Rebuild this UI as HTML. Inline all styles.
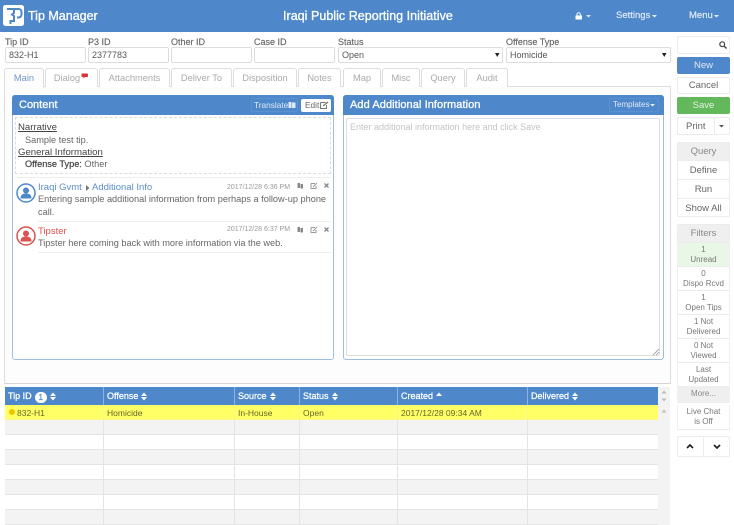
<!DOCTYPE html>
<html><head><meta charset="utf-8">
<style>
html,body{margin:0;padding:0;width:734px;height:525px;overflow:hidden;background:#fff;}
body{font-family:"Liberation Sans",sans-serif;font-size:10px;color:#555;position:relative;}
.a{position:absolute;box-sizing:border-box;white-space:nowrap;}
.lab{top:37px;font-size:9px;line-height:10px;color:#666;-webkit-text-stroke:.15px #666;}
.inp{top:47px;height:16px;border:1px solid #ddd;border-radius:2px;background:#fff;font-size:9px;line-height:15px;padding-left:3px;color:#555;}
.tab{top:68px;height:19px;border:1px solid #ddd;border-bottom:0;border-radius:3px 3px 0 0;background:#fff;text-align:center;line-height:19px;font-size:9.300px;color:#aaa;}
.panel{border:1px solid #9dbfe3;border-radius:3px;background:#fff;}
.ph{background:#4e88ca;color:#fff;font-size:11px;-webkit-text-stroke:.3px #fff;line-height:20px;}
.btn{left:677px;width:53px;border:1px solid #ececec;border-radius:2px;background:#fff;text-align:center;font-size:9.500px;color:#666;}
.hc{top:387px;height:18px;background:#4e88ca;border-right:1px solid #8db3de;color:#fff;-webkit-text-stroke:.25px #fff;font-size:9px;line-height:18px;padding-left:3px;}
.sb{left:677px;width:53px;border-bottom:1px solid #ececec;background:#fff;text-align:center;font-size:8px;line-height:10px;color:#777;border-left:1px solid #f0f0f0;border-right:1px solid #f0f0f0;}
.row{left:5px;width:653px;height:15px;border-bottom:1px solid #e4e4e4;}
.vl{top:405px;width:1px;height:120px;background:#e4e4e4;}
.cell{top:406px;font-size:8.500px;line-height:15px;color:#66662a;}
.ts{font-size:7px;color:#999;}
.txt{font-size:9.200px;line-height:12px;color:#666;}
.sort{display:inline-block;vertical-align:-2px;margin-left:3px;-webkit-text-stroke:0;}
</style></head><body>

<div class="a" style="left:0;top:0;width:734px;height:32px;background:#4e88ca;"></div>
<svg class="a" style="left:3px;top:5px" width="22" height="22" viewBox="0 0 22 22">
<rect x="0" y="0" width="21" height="21" rx="2.500" fill="#fff"/>
<path d="M9 4h6.500a3 3 0 0 1 3 3v2.500a3 3 0 0 1-3 3H14" fill="none" stroke="#4e88ca" stroke-width="2"/>
<path d="M4 4h7v4L9 9.500 11 11v5H7.500v3" fill="none" stroke="#4e88ca" stroke-width="2"/>
</svg>
<div class="a" style="left:28px;top:8px;font-size:12.500px;line-height:17px;color:#fff;-webkit-text-stroke:.3px #fff;">Tip Manager</div>
<div class="a" style="left:283px;top:8px;font-size:12.500px;line-height:17px;color:#fff;-webkit-text-stroke:.3px #fff;letter-spacing:.03px;">Iraqi Public Reporting Initiative</div>
<svg class="a" style="left:575px;top:12px" width="18" height="8" viewBox="0 0 18 8"><path d="M2 3.500V2.500a1.700 1.700 0 0 1 3.400 0v1" fill="none" stroke="#fff" stroke-width="1"/><rect x=".5" y="3.500" width="6.500" height="4" fill="#fff"/><path d="M11 3h5l-2.500 2.500z" fill="#d8e5f4"/></svg>
<div class="a" style="left:616px;top:10px;font-size:9.500px;line-height:12px;color:#e4edf7;-webkit-text-stroke:.15px #e4edf7;">Settings</div>
<svg class="a" style="left:652px;top:15px" width="6" height="3"><path d="M0 0h5L2.500 2.500z" fill="#e4edf7"/></svg>
<div class="a" style="left:689px;top:10px;font-size:9.500px;line-height:12px;color:#e4edf7;-webkit-text-stroke:.15px #e4edf7;">Menu</div>
<svg class="a" style="left:714px;top:15px" width="6" height="3"><path d="M0 0h5L2.500 2.500z" fill="#e4edf7"/></svg>

<div class="a lab" style="left:5px;">Tip ID</div>
<div class="a lab" style="left:88px;">P3 ID</div>
<div class="a lab" style="left:171px;">Other ID</div>
<div class="a lab" style="left:254px;">Case ID</div>
<div class="a lab" style="left:338px;">Status</div>
<div class="a lab" style="left:506px;">Offense Type</div>
<div class="a inp" style="left:5px;width:81px;">832-H1</div>
<div class="a inp" style="left:88px;width:81px;">2377783</div>
<div class="a inp" style="left:171px;width:81px;"></div>
<div class="a inp" style="left:254px;width:81px;"></div>
<div class="a inp" style="left:338px;width:165px;">Open</div>
<div class="a inp" style="left:506px;width:165px;">Homicide</div>
<svg class="a" style="left:495px;top:53px" width="5" height="4"><path d="M0 0h4.500L2.250 4z" fill="#222"/></svg>
<svg class="a" style="left:662px;top:53px" width="5" height="4"><path d="M0 0h4.500L2.250 4z" fill="#222"/></svg>

<div class="a" style="left:4px;top:86px;width:667px;height:298px;border:1px solid #ddd;background:#fdfdfd;border-bottom-color:#dcd4d4;"></div>
<div class="a tab" style="left:4px;width:40px;color:#6f97cc;background:#fdfdfd;height:20px;">Main</div>
<div class="a tab" style="left:45px;width:53px;padding-right:9px;">Dialog</div>
<svg class="a" style="left:81px;top:73px" width="8" height="7"><path d="M1.500 .5h4.500a1 1 0 0 1 1 1v1.500a1 1 0 0 1-1 1H4L2.500 5.500V4h-1a1 1 0 0 1-1-1V1.500a1 1 0 0 1 1-1z" fill="#d9342f"/></svg>
<div class="a tab" style="left:99px;width:71px;">Attachments</div>
<div class="a tab" style="left:171px;width:61px;">Deliver To</div>
<div class="a tab" style="left:233px;width:64px;">Disposition</div>
<div class="a tab" style="left:298px;width:43px;">Notes</div>
<div class="a tab" style="left:343px;width:38px;">Map</div>
<div class="a tab" style="left:382px;width:38px;">Misc</div>
<div class="a tab" style="left:421px;width:44px;">Query</div>
<div class="a tab" style="left:466px;width:42px;">Audit</div>

<!-- Content panel -->
<div class="a panel" style="left:12px;top:95px;width:322px;height:265px;"></div>
<div class="a ph" style="left:12px;top:95px;width:322px;height:20px;border-radius:3px 3px 0 0;padding-left:7px;">Content</div>
<div class="a" style="left:251px;top:98px;width:47px;height:14px;border:1px solid #5a92d0;border-radius:2px;color:#dfe9f5;font-size:8.300px;line-height:13px;padding-left:2px;">Translate</div>
<svg class="a" style="left:288px;top:101px" width="8" height="8"><path d="M.5 1h3v6h-3zM4 1.500h3.500v5.500H4z" fill="#dfe9f5"/></svg>
<div class="a" style="left:301px;top:99px;width:30px;height:13px;background:#fff;border-radius:2px;color:#666;font-size:8.300px;line-height:13px;padding-left:4px;">Edit</div>
<svg class="a" style="left:320px;top:101px" width="9" height="8"><path d="M.5 1.500h5M.5 1.500v6h6V4" fill="none" stroke="#777" stroke-width="1"/><path d="M3 5l5-4" stroke="#777" stroke-width="1.300"/></svg>

<div class="a" style="left:15px;top:117px;width:316px;height:57px;border:1px dashed #ddd;"></div>
<div class="a" style="left:18px;top:122px;font-size:9.600px;line-height:12px;color:#444;text-decoration:underline;">Narrative</div>
<div class="a txt" style="left:25px;top:134px;">Sample test tip.</div>
<div class="a" style="left:18px;top:147px;font-size:9.600px;line-height:12px;color:#444;text-decoration:underline;">General Information</div>
<div class="a txt" style="left:25px;top:158px;"><span style="color:#444;-webkit-text-stroke:.2px #444;">Offense Type:</span> Other</div>
<div class="a" style="left:15px;top:177px;width:316px;height:1px;background:#eee;"></div>

<svg class="a" style="left:16px;top:183px" width="20" height="20" viewBox="0 0 20 20"><circle cx="10" cy="10" r="9" fill="#fff" stroke="#4e88ca" stroke-width="1.500"/><circle cx="10" cy="7.500" r="3" fill="#4e88ca"/><path d="M4.500 15.500c0-4 2.500-5 5.500-5s5.500 1 5.500 5z" fill="#4e88ca"/></svg>
<div class="a" style="left:38px;top:182px;font-size:9.500px;line-height:12px;color:#5b8dcb;">Iraqi Gvmt</div>
<svg class="a" style="left:86px;top:185px" width="4" height="6"><path d="M0 0l3.500 3L0 6z" fill="#777"/></svg>
<div class="a" style="left:92px;top:182px;font-size:9.500px;line-height:12px;color:#5b8dcb;">Additional Info</div>
<div class="a ts" style="left:227px;top:183px;line-height:10px;">2017/12/28 6:36 PM</div>
<div class="a txt" style="left:38px;top:193px;line-height:12.500px;">Entering sample additional information from perhaps a follow-up phone<br>call.</div>
<div class="a" style="left:38px;top:221px;width:293px;height:1px;background:#eee;"></div>

<svg class="a" style="left:16px;top:226px" width="20" height="20" viewBox="0 0 20 20"><circle cx="10" cy="10" r="9" fill="#fff" stroke="#d9534f" stroke-width="1.500"/><circle cx="10" cy="7.500" r="3" fill="#d9534f"/><path d="M4.500 15.500c0-4 2.500-5 5.500-5s5.500 1 5.500 5z" fill="#d9534f"/></svg>
<div class="a" style="left:38px;top:226px;font-size:9.500px;line-height:12px;color:#d9534f;">Tipster</div>
<div class="a ts" style="left:227px;top:225px;line-height:10px;">2017/12/28 6:37 PM</div>
<div class="a txt" style="left:38px;top:237px;line-height:12.500px;">Tipster here coming back with more information via the web.</div>
<div class="a" style="left:38px;top:252px;width:293px;height:1px;background:#eee;"></div>

<svg class="a" style="left:297px;top:182px" width="34" height="8"><path d="M.5 1h2.500v5H.5zM3.500 2h2.500v4.500H3.500z" fill="#888"/><path d="M14 1.500h4M14 1.500v5h5V4" fill="none" stroke="#999"/><path d="M16 5l4-4" stroke="#999"/><path d="M27.500 1.500l4 4M31.500 1.500l-4 4" stroke="#888" stroke-width="1.300"/></svg>
<svg class="a" style="left:297px;top:226px" width="34" height="8"><path d="M.5 1h2.500v5H.5zM3.500 2h2.500v4.500H3.500z" fill="#888"/><path d="M14 1.500h4M14 1.500v5h5V4" fill="none" stroke="#999"/><path d="M16 5l4-4" stroke="#999"/><path d="M27.500 1.500l4 4M31.500 1.500l-4 4" stroke="#888" stroke-width="1.300"/></svg>

<!-- Add info panel -->
<div class="a panel" style="left:343px;top:95px;width:321px;height:265px;"></div>
<div class="a ph" style="left:343px;top:95px;width:321px;height:20px;border-radius:3px 3px 0 0;padding-left:7px;letter-spacing:.08px;">Add Additional Information</div>
<div class="a" style="left:609px;top:98px;width:50px;height:14px;border:1px solid #5a92d0;border-radius:2px;"></div>
<div class="a" style="left:613px;top:99px;font-size:8px;line-height:11px;color:#dfe9f5;">Templates</div>
<svg class="a" style="left:650px;top:104px" width="6" height="3"><path d="M0 0h5L2.500 2.500z" fill="#e4edf7"/></svg>
<div class="a" style="left:346px;top:118px;width:314px;height:238px;border:1px solid #ddd;border-radius:2px;background:#fff;font-size:9px;line-height:17px;color:#c4c4c4;padding-left:3px;">Enter additional information here and click Save</div>
<svg class="a" style="left:653px;top:349px" width="6" height="6"><path d="M0 6l6-6M3 6l3-3" stroke="#999" stroke-width=".8"/></svg>

<!-- Table -->
<div class="a hc" style="left:5px;width:99px;">Tip ID<span style="display:inline-block;width:12px;height:11px;border-radius:6px;background:#fff;color:#4e88ca;text-align:center;font-size:8px;line-height:11px;margin-left:3px;vertical-align:-1px;-webkit-text-stroke:.2px #4e88ca;">1</span><svg class="sort" width="6" height="9"><path d="M0 4L3 .5 6 4zM0 5L3 8.500 6 5z" fill="#fff"/></svg></div>
<div class="a hc" style="left:104px;width:131px;">Offense<svg class="sort" width="6" height="9"><path d="M0 4L3 .5 6 4zM0 5L3 8.500 6 5z" fill="#fff"/></svg></div>
<div class="a hc" style="left:235px;width:65px;">Source<svg class="sort" width="6" height="9"><path d="M0 4L3 .5 6 4zM0 5L3 8.500 6 5z" fill="#fff"/></svg></div>
<div class="a hc" style="left:300px;width:98px;">Status<svg class="sort" width="6" height="9"><path d="M0 4L3 .5 6 4zM0 5L3 8.500 6 5z" fill="#fff"/></svg></div>
<div class="a hc" style="left:398px;width:130px;">Created<svg class="sort" width="6" height="9"><path d="M0 4L3 .5 6 4z" fill="#fff"/></svg></div>
<div class="a hc" style="left:528px;width:130px;border-right:0;">Delivered<svg class="sort" width="6" height="9"><path d="M0 4L3 .5 6 4zM0 5L3 8.500 6 5z" fill="#fff"/></svg></div>

<div class="a row" style="top:405px;background:#ffff66;"></div>
<div class="a row" style="top:420px;background:#f3f3f3;"></div>
<div class="a row" style="top:435px;background:#fff;"></div>
<div class="a row" style="top:450px;background:#f3f3f3;"></div>
<div class="a row" style="top:465px;background:#fff;"></div>
<div class="a row" style="top:480px;background:#f3f3f3;"></div>
<div class="a row" style="top:495px;background:#fff;"></div>
<div class="a row" style="top:510px;background:#f3f3f3;"></div>
<div class="a vl" style="left:103px;"></div>
<div class="a vl" style="left:234px;"></div>
<div class="a vl" style="left:299px;"></div>
<div class="a vl" style="left:397px;"></div>
<div class="a vl" style="left:527px;"></div>
<div class="a" style="left:5px;top:405px;width:653px;height:15px;background:rgba(255,255,102,.7);"></div>
<div class="a" style="left:9px;top:409px;width:6px;height:6px;border-radius:50%;background:#f5c400;"></div>
<div class="a cell" style="left:17px;">832-H1</div>
<div class="a cell" style="left:107px;">Homicide</div>
<div class="a cell" style="left:238px;">In-House</div>
<div class="a cell" style="left:303px;">Open</div>
<div class="a cell" style="left:401px;">2017/12/28 09:34 AM</div>

<div class="a" style="left:658px;top:387px;width:12px;height:138px;background:#f3f3f3;"></div>
<svg class="a" style="left:661px;top:389px" width="6" height="28"><path d="M.5 4.500L3 1.500l2.500 3z" fill="#bbb"/><path d="M.5 9.500L3 12.500l2.500-3z" fill="#bbb"/><path d="M.5 23.500L3 20.500l2.500 3z" fill="#bbb"/></svg>

<!-- Sidebar -->
<div class="a btn" style="top:36px;height:18px;"></div>
<svg class="a" style="left:719px;top:41px" width="8" height="8"><circle cx="3.200" cy="3.200" r="2.400" fill="none" stroke="#444" stroke-width="1.200"/><path d="M5 5l2.500 2.500" stroke="#444" stroke-width="1.400"/></svg>
<div class="a btn" style="top:57px;height:17px;background:#4e88ca;border-color:#4e88ca;color:#dfe9f5;line-height:16px;">New</div>
<div class="a btn" style="top:77px;height:17px;line-height:16px;">Cancel</div>
<div class="a btn" style="top:97px;height:17px;background:#62b85a;border-color:#62b85a;color:#e6f3e4;line-height:16px;">Save</div>
<div class="a btn" style="top:117px;height:18px;line-height:18px;text-align:left;padding-left:8px;">Print</div>
<div class="a" style="left:714px;top:117px;width:1px;height:18px;background:#ececec;"></div>
<svg class="a" style="left:719px;top:125px" width="6" height="3"><path d="M0 0h5L2.500 2.500z" fill="#555"/></svg>

<div class="a btn" style="top:142px;height:19px;background:#efefef;color:#888;line-height:18px;border-radius:2px 2px 0 0;">Query</div>
<div class="a btn" style="top:160px;height:20px;line-height:19px;border-radius:0;">Define</div>
<div class="a btn" style="top:179px;height:20px;line-height:19px;border-radius:0;">Run</div>
<div class="a btn" style="top:198px;height:19px;line-height:19px;border-radius:0 0 2px 2px;">Show All</div>

<div class="a btn" style="top:224px;height:19px;background:#efefef;color:#888;line-height:18px;">Filters</div>
<div class="a sb" style="top:243px;height:24px;background:#e9f8e6;padding-top:2px;">1<br>Unread</div>
<div class="a sb" style="top:267px;height:24px;padding-top:2px;">0<br>Dispo Rcvd</div>
<div class="a sb" style="top:291px;height:24px;padding-top:2px;">1<br>Open Tips</div>
<div class="a sb" style="top:315px;height:24px;padding-top:2px;">1 Not<br>Delivered</div>
<div class="a sb" style="top:339px;height:24px;padding-top:2px;">0 Not<br>Viewed</div>
<div class="a sb" style="top:363px;height:24px;padding-top:2px;">Last<br>Updated</div>
<div class="a sb" style="top:386px;height:17px;background:#efefef;color:#888;line-height:15px;">More...</div>
<div class="a sb" style="top:405px;height:25px;padding-top:2px;">Live Chat<br>is Off</div>
<div class="a btn" style="top:436px;height:21px;"></div>
<div class="a" style="left:703px;top:436px;width:1px;height:21px;background:#ececec;"></div>
<svg class="a" style="left:686px;top:444px" width="8" height="5"><path d="M1 4l3-3 3 3" fill="none" stroke="#222" stroke-width="1.700"/></svg>
<svg class="a" style="left:713px;top:444px" width="8" height="5"><path d="M1 1l3 3 3-3" fill="none" stroke="#222" stroke-width="1.700"/></svg>

</body></html>
